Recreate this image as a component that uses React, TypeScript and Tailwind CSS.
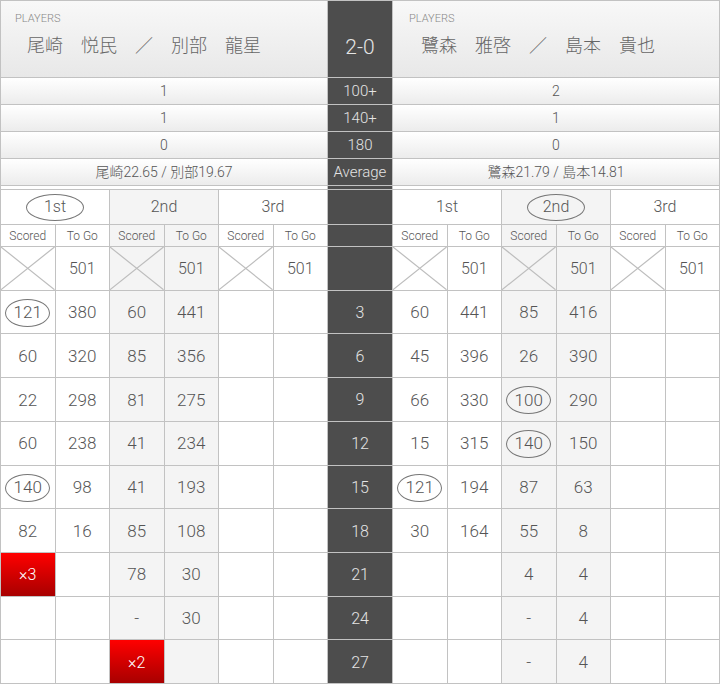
import type { ReactNode } from "react";

type Cell = string | number | null;

const leftRows: Cell[][] = [
    ["121o", 380, 60, 441, null, null],
    [60, 320, 85, 356, null, null],
    [22, 298, 81, 275, null, null],
    [60, 238, 41, 234, null, null],
    ["140o", 98, 41, 193, null, null],
    [82, 16, 85, 108, null, null],
    ["x3", null, 78, 30, null, null],
    [null, null, "-", 30, null, null],
    [null, null, "x2", null, null, null],
];

const rightRows: Cell[][] = [
    [60, 441, 85, 416, null, null],
    [45, 396, 26, 390, null, null],
    [66, 330, "100o", 290, null, null],
    [15, 315, "140o", 150, null, null],
    ["121o", 194, 87, 63, null, null],
    [30, 164, 55, 8, null, null],
    [null, null, 4, 4, null, null],
    [null, null, "-", 4, null, null],
    [null, null, "-", 4, null, null],
];

const darts = [3, 6, 9, 12, 15, 18, 21, 24, 27];

const stats = [
    { label: "100+", left: "1", right: "2" },
    { label: "140+", left: "1", right: "1" },
    { label: "180", left: "0", right: "0" },
    { label: "Average", left: "尾崎22.65 / 別部19.67", right: "鷺森21.79 / 島本14.81" },
];

function Dark({ children, className = "" }: { children?: ReactNode; className?: string }) {
    return <div className={`flex items-center justify-center bg-[#4d4d4d] text-[#e4e4e4] ${className}`}>{children}</div>;
}

function Cross({ shaded }: { shaded: boolean }) {
    return (
        <div className={shaded ? "bg-[#f4f4f4]" : "bg-white"}>
            <svg className="h-full w-full" viewBox="0 0 100 100" preserveAspectRatio="none">
                <line x1="0" y1="0" x2="100" y2="100" stroke="#bdbdbd" strokeWidth="1.2" vectorEffect="non-scaling-stroke" />
                <line x1="100" y1="0" x2="0" y2="100" stroke="#bdbdbd" strokeWidth="1.2" vectorEffect="non-scaling-stroke" />
            </svg>
        </div>
    );
}

function ScoreCell({ value, shaded }: { value: Cell; shaded: boolean }) {
    const bg = shaded ? "bg-[#f4f4f4]" : "bg-white";
    if (typeof value === "string" && value.startsWith("x")) {
        return (
            <div className="flex items-center justify-center bg-gradient-to-b from-[#ff0000] to-[#a80000] pt-[2px] text-[16px] text-white">
                ×{value.slice(1)}
            </div>
        );
    }
    if (typeof value === "string" && value.endsWith("o")) {
        return (
            <div className={`flex items-center justify-center pt-[2px] ${bg}`}>
                <span className="flex h-[28px] w-[45px] items-center justify-center rounded-[50%] border border-[#777]">
                    {value.slice(0, -1)}
                </span>
            </div>
        );
    }
    return <div className={`flex items-center justify-center pt-[2px] ${bg}`}>{value ?? ""}</div>;
}

function PlayersHeader({ names, pad }: { names: string; pad: string }) {
    return (
        <div className={`col-span-6 bg-gradient-to-b from-[#f8f8f8] to-[#e8e8e8] ${pad}`}>
            <p className="pt-[12px] text-[11px] leading-none text-[#888]">PLAYERS</p>
            <p className="mt-[13px] pl-[12px] text-[18px] leading-none text-[#666]">{names}</p>
        </div>
    );
}

function LegHeader({ marked }: { marked: number }) {
    return (
        <>
            {["1st", "2nd", "3rd"].map((leg, i) => (
                <div
                    key={leg}
                    className={`col-span-2 flex items-center justify-center text-[16px] ${i === 1 ? "bg-[#f4f4f4]" : "bg-white"}`}
                >
                    {i === marked ? (
                        <span className="flex h-[27px] w-[58px] items-center justify-center rounded-[50%] border border-[#777]">{leg}</span>
                    ) : (
                        leg
                    )}
                </div>
            ))}
        </>
    );
}

function SubHeader() {
    return (
        <>
            {[0, 1, 2, 3, 4, 5].map((i) => (
                <div
                    key={i}
                    className={`flex items-center justify-center text-[12px] ${i === 2 || i === 3 ? "bg-[#f4f4f4]" : "bg-white"}`}
                >
                    {i % 2 === 0 ? "Scored" : "To Go"}
                </div>
            ))}
        </>
    );
}

function StartRow() {
    return (
        <>
            {[0, 1, 2, 3, 4, 5].map((i) =>
                i % 2 === 0 ? (
                    <Cross key={i} shaded={i === 2} />
                ) : (
                    <ScoreCell key={i} value={501} shaded={i === 3} />
                ),
            )}
        </>
    );
}

export default function App() {
    return (
        <div
            className="grid h-[684px] w-[720px] grid-cols-[repeat(6,minmax(0,1fr))_64px_repeat(6,minmax(0,1fr))] grid-rows-[76px_26px_26px_26px_26px_3px_34px_21px_repeat(10,minmax(0,1fr))] gap-px bg-[#c2c2c2] p-px font-light text-[#555]"
            style={{ fontFamily: 'Roboto, "Noto Sans CJK JP", sans-serif' }}
        >
            <PlayersHeader names="尾崎　悦民　／　別部　龍星" pad="pl-[14px]" />
            <Dark className="pt-[18px] text-[21px]">2-0</Dark>
            <PlayersHeader names="鷺森　雅啓　／　島本　貴也" pad="pl-[16px]" />

            {stats.map((s) => (
                <div key={s.label} className="contents">
                    <div className="col-span-6 flex items-center justify-center bg-gradient-to-b from-white to-[#ececec] text-[14px]">
                        {s.left}
                    </div>
                    <Dark className="text-[15px]">{s.label}</Dark>
                    <div className="col-span-6 flex items-center justify-center bg-gradient-to-b from-white to-[#ececec] text-[14px]">
                        {s.right}
                    </div>
                </div>
            ))}

            <div className="col-span-6 bg-white" />
            <Dark />
            <div className="col-span-6 bg-white" />

            <LegHeader marked={0} />
            <Dark />
            <LegHeader marked={1} />

            <SubHeader />
            <Dark />
            <SubHeader />

            <StartRow />
            <Dark />
            <StartRow />

            {darts.map((d, r) => (
                <div key={d} className="contents text-[17px]">
                    {leftRows[r].map((v, i) => (
                        <ScoreCell key={`l${i}`} value={v} shaded={i === 2 || i === 3} />
                    ))}
                    <Dark className="pt-[2px] text-[16px]">{d}</Dark>
                    {rightRows[r].map((v, i) => (
                        <ScoreCell key={`r${i}`} value={v} shaded={i === 2 || i === 3} />
                    ))}
                </div>
            ))}
        </div>
    );
}
